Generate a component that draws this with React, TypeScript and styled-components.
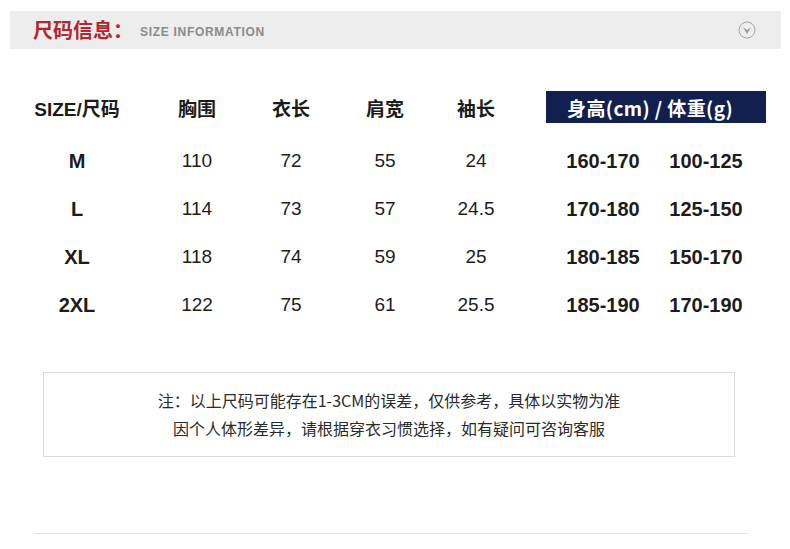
import styled, { createGlobalStyle } from "styled-components";

const GlobalStyle = createGlobalStyle`
  body {
    margin: 0;
    background: #fff;
    font-family: "Liberation Sans", "Noto Sans CJK SC", sans-serif;
  }
`;

const sizes = [
  { size: "M", chest: "110", length: "72", shoulder: "55", sleeve: "24", height: "160-170", weight: "100-125" },
  { size: "L", chest: "114", length: "73", shoulder: "57", sleeve: "24.5", height: "170-180", weight: "125-150" },
  { size: "XL", chest: "118", length: "74", shoulder: "59", sleeve: "25", height: "180-185", weight: "150-170" },
  { size: "2XL", chest: "122", length: "75", shoulder: "61", sleeve: "25.5", height: "185-190", weight: "170-190" },
];

function DownIcon() {
  return (
    <svg width="18" height="18" viewBox="0 0 18 18">
      <circle cx="9" cy="9" r="8" fill="none" stroke="#a6a6a6" strokeWidth="1" />
      <path d="M5 6.3 L9 13 L13 6.3 L9 9 Z" fill="#9a9a9a" />
    </svg>
  );
}

export default function App() {
  return (
    <Page>
      <GlobalStyle />
      <TitleBar>
        <Title>尺码信息：</Title>
        <SubTitle>SIZE INFORMATION</SubTitle>
        <IconWrap>
          <DownIcon />
        </IconWrap>
      </TitleBar>

      <Table>
        <HeadCell>SIZE/尺码</HeadCell>
        <HeadCell>胸围</HeadCell>
        <HeadCell>衣长</HeadCell>
        <HeadCell>肩宽</HeadCell>
        <HeadCell>袖长</HeadCell>
        <span />
        <NavyHead>身高(cm) / 体重(g)</NavyHead>
        {sizes.map((row) => (
          <Row key={row.size}>
            <Cell bold>{row.size}</Cell>
            <Cell>{row.chest}</Cell>
            <Cell>{row.length}</Cell>
            <Cell>{row.shoulder}</Cell>
            <Cell>{row.sleeve}</Cell>
            <span />
            <Cell bold>{row.height}</Cell>
            <Cell bold>{row.weight}</Cell>
            <span />
          </Row>
        ))}
      </Table>

      <Note>
        <NoteLine>注：以上尺码可能存在1-3CM的误差，仅供参考，具体以实物为准</NoteLine>
        <NoteLine>因个人体形差异，请根据穿衣习惯选择，如有疑问可咨询客服</NoteLine>
      </Note>

      <Divider />
    </Page>
  );
}

const Page = styled.div`
  width: 790px;
  height: 549px;
  padding-top: 11px;
  box-sizing: border-box;
  overflow: hidden;
`;

const TitleBar = styled.div`
  display: flex;
  align-items: center;
  width: 771px;
  height: 38px;
  margin-left: 10px;
  padding: 0 25px 0 23px;
  box-sizing: border-box;
  background: #ededed;
`;

const Title = styled.span`
  font-family: "Noto Sans CJK SC", sans-serif;
  font-size: 20px;
  font-weight: 700;
  color: #b3262b;
  line-height: 38px;
`;

const SubTitle = styled.span`
  font-family: "Liberation Sans", sans-serif;
  font-size: 12px;
  font-weight: 700;
  letter-spacing: 0.7px;
  color: #8a8a8a;
  margin-left: 7px;
  padding-top: 3px;
`;

const IconWrap = styled.span`
  display: flex;
  margin-left: auto;
`;

const Table = styled.div`
  display: grid;
  grid-template-columns: 146px 94px 94px 94px 88px 26px 114px 92px 14px;
  grid-template-rows: 46px;
  grid-auto-rows: 48px;
  padding-left: 4px;
  margin-top: 42px;
  color: #1e1e1e;
`;

const HeadCell = styled.div`
  align-self: start;
  display: flex;
  align-items: center;
  justify-content: center;
  font-family: "Liberation Sans", "Noto Sans CJK SC", sans-serif;
  font-size: 19px;
  font-weight: 700;
  height: 32px;
  color: #1c1c1c;
`;

const NavyHead = styled.div`
  grid-column: 7 / 10;
  align-self: start;
  display: flex;
  align-items: center;
  padding-left: 21px;
  height: 32px;
  background: #12204f;
  color: #fff;
  font-family: "Noto Sans CJK SC", sans-serif;
  font-size: 19px;
  font-weight: 700;
  letter-spacing: 0.4px;
`;

const Row = styled.div`
  display: contents;
`;

const Cell = styled.div<{ bold?: boolean }>`
  display: flex;
  align-items: center;
  justify-content: center;
  font-size: ${(p) => (p.bold ? "20px" : "19px")};
  font-weight: ${(p) => (p.bold ? 700 : 400)};
  color: #1c1c1c;
`;

const Note = styled.div`
  width: 692px;
  height: 85px;
  margin: 43px 0 0 43px;
  padding-top: 13px;
  box-sizing: border-box;
  border: 1px solid #dcdcdc;
  display: flex;
  flex-direction: column;
  align-items: center;
`;

const NoteLine = styled.div`
  font-family: "Noto Sans CJK SC", sans-serif;
  font-size: 16px;
  line-height: 28px;
  color: #2a2a2a;
`;

const Divider = styled.div`
  width: 714px;
  height: 1px;
  margin: 76px 0 0 34px;
  background: #e3e3e3;
`;
